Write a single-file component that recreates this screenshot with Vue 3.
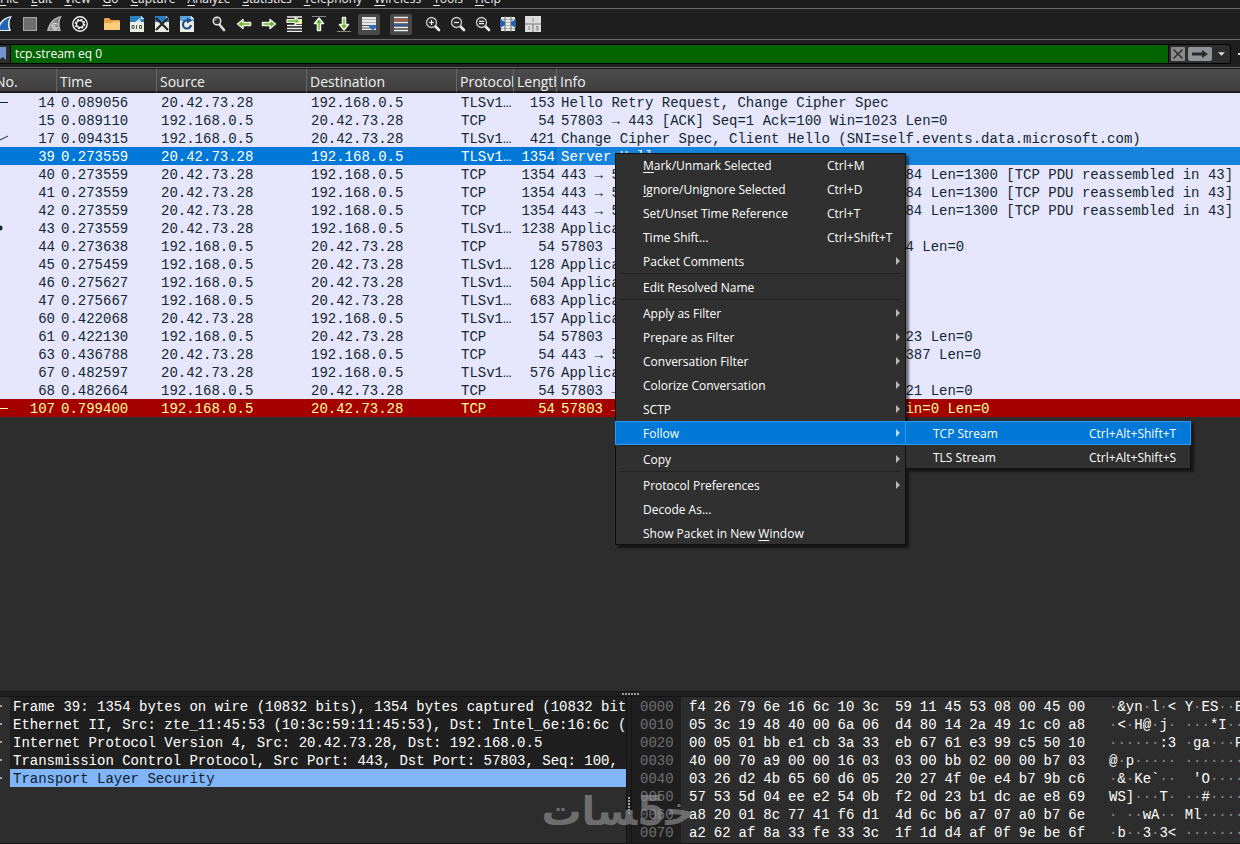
<script setup>
import { ref } from 'vue'

const menus = ['File', 'Edit', 'View', 'Go', 'Capture', 'Analyze', 'Statistics', 'Telephony', 'Wireless', 'Tools', 'Help']
const filter = ref('tcp.stream eq 0')

const A = '20.42.73.28'
const B = '192.168.0.5'
const TLS = 'TLSv1…'
const pdu = '[TCP PDU reassembled in 43]'
const packets = [
  [14, '0.089056', A, B, TLS, 153, 'Hello Retry Request, Change Cipher Spec'],
  [15, '0.089110', B, A, 'TCP', 54, '57803 → 443 [ACK] Seq=1 Ack=100 Win=1023 Len=0'],
  [17, '0.094315', B, A, TLS, 421, 'Change Cipher Spec, Client Hello (SNI=self.events.data.microsoft.com)'],
  [39, '0.273559', A, B, TLS, 1354, 'Server Hello'],
  [40, '0.273559', A, B, 'TCP', 1354, `443 → 57803 [ACK] Seq=1400 Ack=761 Win=4184 Len=1300 ${pdu}`],
  [41, '0.273559', A, B, 'TCP', 1354, `443 → 57803 [ACK] Seq=2700 Ack=761 Win=4184 Len=1300 ${pdu}`],
  [42, '0.273559', A, B, 'TCP', 1354, `443 → 57803 [ACK] Seq=4000 Ack=761 Win=4184 Len=1300 ${pdu}`],
  [43, '0.273559', A, B, TLS, 1238, 'Application Data'],
  [44, '0.273638', B, A, 'TCP', 54, '57803 → 443 [ACK] Seq=761 Ack=648 Win=1024 Len=0'],
  [45, '0.275459', B, A, TLS, 128, 'Application Data'],
  [46, '0.275627', B, A, TLS, 504, 'Application Data'],
  [47, '0.275667', B, A, TLS, 683, 'Application Data'],
  [60, '0.422068', A, B, TLS, 157, 'Application Data'],
  [61, '0.422130', B, A, 'TCP', 54, '57803 → 443 [ACK] Seq=1914 Ack=658 Win=1023 Len=0'],
  [63, '0.436788', A, B, 'TCP', 54, '443 → 57803 [ACK] Seq=6587 Ack=191 Win=16387 Len=0'],
  [67, '0.482597', A, B, TLS, 576, 'Application Data'],
  [68, '0.482664', B, A, 'TCP', 54, '57803 → 443 [ACK] Seq=1914 Ack=710 Win=1021 Len=0'],
  [107, '0.799400', B, A, 'TCP', 54, '57803 → 443 [RST, ACK] Seq=1914 Ack=710 Win=0 Len=0'],
]
const marks = { 14: 'M0 9.500H8', 17: 'M0 11L8 7', 107: 'M0 9.500H8' }

const menuItems = [
  { key: 'M', rest: 'ark/Unmark Selected', short: 'Ctrl+M' },
  { key: 'I', rest: 'gnore/Unignore Selected', short: 'Ctrl+D' },
  { rest: 'Set/Unset Time Reference', short: 'Ctrl+T' },
  { rest: 'Time Shift...', short: 'Ctrl+Shift+T' },
  { rest: 'Packet Comments', sub: true },
  { sep: true },
  { rest: 'Edit Resolved Name' },
  { sep: true },
  { rest: 'Apply as Filter', sub: true },
  { rest: 'Prepare as Filter', sub: true },
  { rest: 'Conversation Filter', sub: true },
  { rest: 'Colorize Conversation', sub: true },
  { rest: 'SCTP', sub: true },
  { rest: 'Follow', sub: true, active: true },
  { sep: true },
  { rest: 'Copy', sub: true },
  { sep: true },
  { rest: 'Protocol Preferences', sub: true },
  { rest: 'Decode As...' },
  { pre: 'Show Packet in New ', key: 'W', rest: 'indow' },
]
const subItems = [
  { rest: 'TCP Stream', short: 'Ctrl+Alt+Shift+T', active: true },
  { rest: 'TLS Stream', short: 'Ctrl+Alt+Shift+S' },
]

const details = [
  'Frame 39: 1354 bytes on wire (10832 bits), 1354 bytes captured (10832 bits)',
  'Ethernet II, Src: zte_11:45:53 (10:3c:59:11:45:53), Dst: Intel_6e:16:6c (f4:26:79:6e:16:6c)',
  'Internet Protocol Version 4, Src: 20.42.73.28, Dst: 192.168.0.5',
  'Transmission Control Protocol, Src Port: 443, Dst Port: 57803, Seq: 100, Ack: 761',
  'Transport Layer Security',
]

const dump = [
  'f4 26 79 6e 16 6c 10 3c 59 11 45 53 08 00 45 00',
  '05 3c 19 48 40 00 6a 06 d4 80 14 2a 49 1c c0 a8',
  '00 05 01 bb e1 cb 3a 33 eb 67 61 e3 99 c5 50 10',
  '40 00 70 a9 00 00 16 03 03 00 bb 02 00 00 b7 03',
  '03 26 d2 4b 65 60 d6 05 20 27 4f 0e e4 b7 9b c6',
  '57 53 5d 04 ee e2 54 0b f2 0d 23 b1 dc ae e8 69',
  'a8 20 01 8c 77 41 f6 d1 4d 6c b6 a7 07 a0 b7 6e',
  'a2 62 af 8a 33 fe 33 3c 1f 1d d4 af 0f 9e be 6f',
].map((line, i) => {
  const bytes = line.split(' ')
  const chars = bytes.map((b) => {
    const n = parseInt(b, 16)
    return n >= 32 && n < 127 ? { c: String.fromCharCode(n) } : { c: '·', dim: true }
  })
  return {
    offset: '00' + i + '0',
    groups: [bytes.slice(0, 8), bytes.slice(8)],
    chars: [...chars.slice(0, 8), { c: ' ' }, ...chars.slice(8)],
  }
})
</script>

<template>
  <div class="app">
    <nav class="menubar" aria-label="Main menu">
      <button v-for="m in menus" :key="m" type="button"><u>{{ m[0] }}</u>{{ m.slice(1) }}</button>
    </nav>

    <div class="toolbar" role="toolbar" aria-label="Main toolbar">
      <button type="button" aria-label="Start capture">
        <svg viewBox="0 0 16 16"><path d="M0 15C1 7 6 1 15 0C12 4 12 10 14 15Z" fill="#e8eef5"/><path d="M2 14C3 8 7 3 13 1.500C10.500 5 10.500 10 12 14Z" fill="#2163b4"/></svg>
      </button>
      <button type="button" aria-label="Stop capture">
        <svg viewBox="0 0 16 16"><rect x="1.500" y="1.500" width="13" height="13" fill="#6e6e6e" stroke="#a6a6a6"/></svg>
      </button>
      <button type="button" aria-label="Restart capture">
        <svg viewBox="0 0 16 16"><path d="M0 15C2 7 6 1 15 0C12 4 12 10 14 15Z" fill="#b8b8b8"/><path d="M2 14C4 8 7 3 13 1.500C10.500 5 10.500 10 12 14Z" fill="#858585"/><path d="M10.500 8.500A3 3 0 1 0 11 11M8.500 9.500A1.200 1.200 0 1 0 9 11.500" fill="none" stroke="#d6d6d6" stroke-width="1.200"/></svg>
      </button>
      <button type="button" aria-label="Capture options">
        <svg viewBox="0 0 16 16"><circle cx="8" cy="8" r="7.200" fill="#1d1d1d" stroke="#f2f2f2" stroke-width="1.400"/><circle cx="8" cy="8" r="4.600" fill="none" stroke="#f2f2f2" stroke-width="1.400" stroke-dasharray="2 1.600"/><circle cx="8" cy="8" r="3.500" fill="none" stroke="#f2f2f2" stroke-width="1.400"/></svg>
      </button>
      <i></i>
      <button type="button" aria-label="Open">
        <svg viewBox="0 0 16 16"><path d="M0 3Q0 2 1 2H5L7 4H15Q16 4 16 5V13Q16 14 15 14H1Q0 14 0 13Z" fill="#e5a345"/><path d="M0 7H8L9.500 5.500H16V13Q16 14 15 14H1Q0 14 0 13Z" fill="#fbcd79"/></svg>
      </button>
      <button type="button" aria-label="Save">
        <svg viewBox="0 0 16 16"><path d="M1 0H12L15 3V16H1Z" fill="#e9eee2"/><path d="M1 0H12L15 3V6H1Z" fill="#2a7fc2"/><path d="M6 6L11 2L12 6Z" fill="#c8dff0"/><path d="M12 0L15 3H12Z" fill="#fff"/><path d="M3 9.500H5V12.500H3ZM7.500 9V13M10.500 9.500H12.500V12.500H10.500Z" fill="none" stroke="#555" stroke-width="1"/></svg>
      </button>
      <button type="button" aria-label="Close file">
        <svg viewBox="0 0 16 16"><path d="M1 0H12L15 3V16H1Z" fill="#e9eee2"/><path d="M1 0H12L15 3V6H1Z" fill="#2a7fc2"/><path d="M12 0L15 3H12Z" fill="#fff"/><path d="M2 2L14 14M14 2L2 14" stroke="#252525" stroke-width="2.200"/></svg>
      </button>
      <button type="button" aria-label="Reload file">
        <svg viewBox="0 0 16 16"><path d="M1 0H12L15 3V16H1Z" fill="#e9eee2"/><path d="M1 0H12L15 3V5H1Z" fill="#5ba3d8"/><path d="M12 0L15 3H12Z" fill="#fff"/><path d="M9 4.500H8A4 4 0 1 0 12 9" fill="none" stroke="#204b8f" stroke-width="2.200"/><path d="M8 1.500L13 4.500L8 7.500Z" fill="#204b8f"/></svg>
      </button>
      <i></i>
      <button type="button" aria-label="Find packet">
        <svg viewBox="0 0 16 16"><path d="M8 8L13 14" stroke="#ddd" stroke-width="2.600" stroke-linecap="round"/><circle cx="6" cy="5" r="3.800" fill="#333" stroke="#ededed" stroke-width="1.400"/><path d="M4 5Q4 3 6 3" fill="none" stroke="#999"/></svg>
      </button>
      <button type="button" aria-label="Go back">
        <svg viewBox="0 0 16 16"><path d="M1.500 8L7 3.500V6.500H14.500V9.500H7V12.500Z" fill="#64b52a" stroke="#f1f5e9" stroke-width="1.500" stroke-linejoin="round"/></svg>
      </button>
      <button type="button" aria-label="Go forward">
        <svg viewBox="0 0 16 16"><path d="M14.500 8L9 3.500V6.500H1.500V9.500H9V12.500Z" fill="#64b52a" stroke="#f1f5e9" stroke-width="1.500" stroke-linejoin="round"/></svg>
      </button>
      <button type="button" aria-label="Go to packet">
        <svg viewBox="0 0 16 16"><path d="M1 1H16M1 9.500H16M1 12.500H16M1 15.500H16" stroke="#efefef" stroke-width="1.500"/><path d="M11 3H16V8H11Z" fill="#f4ef9a"/><path d="M14 5L9 1.500V3.700H1V6.300H9V8.500Z" fill="#64b52a" stroke="#f1f5e9" stroke-width="1.200"/></svg>
      </button>
      <button type="button" aria-label="First packet">
        <svg viewBox="0 0 16 16"><path d="M1 .5H15" stroke="#888"/><path d="M8 2L12.500 7.500H9.500V14.500H6.500V7.500H3.500Z" fill="#64b52a" stroke="#f1f5e9" stroke-width="1.500" stroke-linejoin="round"/></svg>
      </button>
      <button type="button" aria-label="Last packet">
        <svg viewBox="0 0 16 16"><path d="M1 15.500H15" stroke="#888"/><path d="M8 14L12.500 8.500H9.500V1.500H6.500V8.500H3.500Z" fill="#64b52a" stroke="#f1f5e9" stroke-width="1.500" stroke-linejoin="round"/></svg>
      </button>
      <button type="button" class="on" aria-label="Auto scroll" aria-pressed="true">
        <svg viewBox="0 0 16 16"><path d="M1 1H15V14H1Z" fill="#e6e6e6"/><path d="M1 3.500H15M1 6.500H15" stroke="#b0b0b0"/><path d="M1 9.500H15M1 12H15" stroke="#5a5a5a"/><path d="M8 9H15V11L12 14.500L8 11Z" fill="#2a6cbb"/></svg>
      </button>
      <i></i>
      <button type="button" class="on" aria-label="Colorize" aria-pressed="true">
        <svg viewBox="0 0 16 16"><path d="M1 1.500H15M1 6.500H15M1 11.500H15M1 14.500H15" stroke="#efefef" stroke-width="1.600"/><path d="M1 4H15" stroke="#d2663c" stroke-width="1.400"/><path d="M1 9H15" stroke="#2f66b8" stroke-width="1.400"/></svg>
      </button>
      <i></i>
      <button type="button" aria-label="Zoom in">
        <svg viewBox="0 0 16 16"><path d="M10 10L14 14" stroke="#ececec" stroke-width="2.600" stroke-linecap="round"/><circle cx="6.500" cy="6.500" r="5" fill="#292929" stroke="#c9c9c9" stroke-width="1.300"/><path d="M4 6.500H9M6.500 4V9" stroke="#eee" stroke-width="1.200"/></svg>
      </button>
      <button type="button" aria-label="Zoom out">
        <svg viewBox="0 0 16 16"><path d="M10 10L14 14" stroke="#ececec" stroke-width="2.600" stroke-linecap="round"/><circle cx="6.500" cy="6.500" r="5" fill="#292929" stroke="#c9c9c9" stroke-width="1.300"/><path d="M4 6.500H9" stroke="#eee" stroke-width="1.200"/></svg>
      </button>
      <button type="button" aria-label="Normal size">
        <svg viewBox="0 0 16 16"><path d="M10 10L14 14" stroke="#ececec" stroke-width="2.600" stroke-linecap="round"/><circle cx="6.500" cy="6.500" r="5" fill="#292929" stroke="#c9c9c9" stroke-width="1.300"/><path d="M4 5.300H9M4 7.700H9" stroke="#eee" stroke-width="1.200"/></svg>
      </button>
      <button type="button" aria-label="Resize columns">
        <svg viewBox="0 0 16 16"><path d="M1 1H15V15H1Z" fill="#e8e8e8"/><path d="M1 3.500H15M1 12.500H15M5 6.500H11M5 9.500H11" stroke="#b4b4b4"/><path d="M5 0V16M11 0V16" stroke="#666"/><path d="M0 3L5 6V9L0 12ZM16 3L11 6V9L16 12Z" fill="#2460ad"/></svg>
      </button>
      <button type="button" aria-label="Reset layout">
        <svg viewBox="0 0 16 16"><path d="M0 0H16V16H0Z" fill="#dcdcdc"/><path d="M0 8H16M8 8V16" stroke="#777"/><path d="M8 2V6M4 10V14M11 10.500H13V14H11M11 12H13" fill="none" stroke="#8a8a8a"/></svg>
      </button>
    </div>

    <form class="filterbar" @submit.prevent>
      <div class="filterbox">
        <button type="button" class="bookmark" aria-label="Bookmark">
          <svg viewBox="0 0 10 16"><path d="M0 1H6V14L3 11L0 13Z" fill="#7394d0"/></svg>
        </button>
        <input v-model="filter" aria-label="Display filter" spellcheck="false">
        <button type="button" class="clear" aria-label="Clear filter">
          <svg viewBox="0 0 14 14"><rect width="14" height="14" rx="1" fill="#8b8b8b"/><path d="M2.500 2.500L11.500 11.500M11.500 2.500L2.500 11.500" stroke="#2e2e2e" stroke-width="1.500"/></svg>
        </button>
        <button type="submit" class="apply" aria-label="Apply filter">
          <svg viewBox="0 0 24 14"><rect width="24" height="14" rx="2" fill="#90949a"/><path d="M4 5.500H14V3L20 7L14 11V8.500H4Z" fill="#2a2a2a"/></svg>
        </button>
        <button type="button" class="drop" aria-label="Recent filters">
          <svg viewBox="0 0 8 4"><path d="M0 0H8L4 4Z" fill="#ddd"/></svg>
        </button>
      </div>
      <button type="button" class="plus" aria-label="Add filter button"><span></span></button>
    </form>

    <main class="list">
      <table>
        <colgroup><col class="c-no"><col class="c-time"><col class="c-addr"><col class="c-addr"><col class="c-proto"><col class="c-len"><col></colgroup>
        <thead>
          <tr><th class="first">No.</th><th>Time</th><th>Source</th><th>Destination</th><th>Protocol</th><th>Length</th><th>Info</th></tr>
        </thead>
        <tbody>
          <tr v-for="p in packets" :key="p[0]" :class="{ selected: p[0] === 39, reset: p[0] === 107 }">
            <td class="num">
              <svg v-if="marks[p[0]]" class="mark" viewBox="0 0 8 18"><path :d="marks[p[0]]" fill="none" stroke="currentColor"/></svg>
              <svg v-else-if="p[0] === 43" class="mark" viewBox="0 0 8 18"><circle cx="0" cy="9" r="2.500" fill="currentColor"/></svg>
              {{ p[0] }}
            </td>
            <td>{{ p[1] }}</td>
            <td>{{ p[2] }}</td>
            <td>{{ p[3] }}</td>
            <td>{{ p[4] }}</td>
            <td class="num">{{ p[5] }}</td>
            <td class="info">{{ p[6] }}</td>
          </tr>
        </tbody>
      </table>
    </main>

    <div class="hsplit"><span></span></div>

    <div class="bottom">
      <section class="details" aria-label="Packet details">
        <div v-for="(d, i) in details" :key="i" class="node" :class="{ current: i === 4 }">
          <span class="twist"></span><span class="label">{{ d }}</span>
        </div>
      </section>
      <div class="vsplit"><span></span></div>
      <section class="bytes" aria-label="Packet bytes">
        <div v-for="r in dump" :key="r.offset" class="hexrow">
          <span class="offset">{{ r.offset }}</span>
          <span v-for="(g, gi) in r.groups" :key="gi" class="group"><span v-for="(b, bi) in g" :key="bi">{{ b }}</span></span>
          <span class="ascii"><span v-for="(c, ci) in r.chars" :key="ci" :class="{ dim: c.dim }">{{ c.c }}</span></span>
        </div>
      </section>
    </div>

    <div class="watermark" lang="ar" dir="rtl">خ&#8205;5&#8205;سات</div>

    <div class="menu context" role="menu">
      <template v-for="(m, i) in menuItems" :key="i">
        <hr v-if="m.sep">
        <button v-else type="button" role="menuitem" :class="{ active: m.active }">
          <span class="name">{{ m.pre }}<u v-if="m.key">{{ m.key }}</u>{{ m.rest }}</span>
          <span v-if="m.short" class="short">{{ m.short }}</span>
          <svg v-if="m.sub" class="arrow" viewBox="0 0 4 8"><path d="M0 0L4 4L0 8Z" fill="currentColor"/></svg>
        </button>
      </template>
    </div>
    <div class="menu submenu" role="menu">
      <button v-for="m in subItems" :key="m.rest" type="button" role="menuitem" :class="{ active: m.active }">
        <span class="name">{{ m.rest }}</span><span class="short">{{ m.short }}</span>
      </button>
    </div>
  </div>
</template>

<style>
body { background: #2d2d2d; overflow: hidden; }
</style>

<style scoped>
* { box-sizing: border-box; }
button { background: none; border: 0; padding: 0; margin: 0; font: inherit; color: inherit; }
svg { display: block; }
.app {
  position: relative; display: flex; flex-direction: column; height: 100vh; overflow: hidden;
  background: #2d2d2d; color: #fff; font-family: "Open Sans", "Noto Sans", sans-serif; font-size: 12px;
}
.menubar {
  display: flex; align-items: flex-end; gap: 12px; height: 8px; overflow: hidden; flex: none;
  padding-bottom: 1px; background: #1c1c1c; color: #eee;
}
.menubar button { line-height: 16px; }
.toolbar {
  display: flex; align-items: center; height: 31px; flex: none; padding-right: 8px;
  background: #1f1f1f; border-top: 1px solid #6a6a6a;
}
.toolbar button { width: 22px; height: 21px; margin-right: 3px; display: grid; place-items: center; flex: none; border-radius: 2px; }
.toolbar button:first-child { margin-left: -6px; }
.toolbar .on { background: #484848; }
.toolbar svg { width: 16px; height: 16px; }
.toolbar i { width: 7px; flex: none; }
.filterbar {
  display: flex; align-items: center; height: 28px; flex: none; gap: 7px; overflow: hidden;
  background: #1f1f1f; border-top: 1px solid #6a6a6a;
}
.filterbox {
  display: flex; align-items: stretch; flex: 1; min-width: 0; height: 20px;
  background: #2d2d2d; border: 1px solid #000; border-left: 0; border-radius: 0 3px 3px 0;
}
.bookmark { width: 11px; flex: none; border-right: 1px solid #000; }
.bookmark svg { width: 10px; height: 16px; }
.filterbox input {
  flex: 1; min-width: 0; border: 0; border-right: 1px solid #000; outline: 0; padding: 0 4px;
  background: #006400; color: #fff; font: inherit;
}
.clear, .apply, .drop { flex: none; display: grid; place-items: center; }
.clear { width: 18px; }
.clear svg { width: 14px; height: 14px; }
.apply { width: 26px; }
.apply svg { width: 24px; height: 14px; }
.drop { width: 17px; }
.drop svg { width: 7px; height: 4px; }
.plus { width: 2px; flex: none; }
.plus span { display: block; height: 2px; background: #ddd; }

.list { flex: 1; min-height: 0; overflow: hidden; border-top: 1px solid #6a6a6a; }
table { width: 100%; table-layout: fixed; border-collapse: separate; border-spacing: 0; }
.c-no { width: 57px; }
.c-time { width: 100px; }
.c-addr { width: 150px; }
.c-proto { width: 57px; }
.c-len { width: 43px; }
th {
  height: 25px; padding: 4px 0 0 3px; overflow: hidden; white-space: nowrap; text-align: left;
  font-size: 14px; line-height: 18px; font-weight: 400; color: #f2f2f2;
  background: linear-gradient(#4b4b4b, #404040); border-top: 1px solid #161616;
  border-bottom: 2px solid #1c1c1c; border-right: 1px solid #666;
}
th.first { padding-left: 0; text-indent: -5px; }
th:last-child { border-right: 0; }
td {
  position: relative; height: 18px; padding: 2px 0 0 4px; overflow: hidden; white-space: nowrap;
  background: #e7e6ff; color: #12272e;
  font: 14px/16px "Liberation Mono", "DejaVu Sans Mono", monospace;
}
td.num { text-align: right; padding: 2px 2px 0 0; }
.selected td { background: #0078d7; color: #fff; }
.selected td.info { background: #1583db; }
.reset td { background: #a40000; color: #fffc9c; }
.mark { position: absolute; left: 0; top: 0; width: 8px; height: 18px; }

.hsplit, .vsplit { display: grid; place-items: center; background: #1f1f1f; }
.hsplit { height: 6px; flex: none; border-top: 1px solid #141414; border-bottom: 1px solid #141414; }
.hsplit span { width: 18px; height: 2px; margin-left: 22px; background: repeating-linear-gradient(90deg, #999 0 2px, transparent 2px 3px); }
.vsplit { border-left: 1px solid #141414; border-right: 1px solid #141414; }
.vsplit span { width: 2px; height: 18px; margin-top: 72px; background: repeating-linear-gradient(#999 0 2px, transparent 2px 3px); }
.bottom {
  display: grid; grid-template-columns: minmax(0, 626fr) 6px minmax(0, 608fr); flex: none;
  border-bottom: 1px solid #141414;
  font: 14px/16px "Liberation Mono", "DejaVu Sans Mono", monospace;
}
.details { overflow: hidden; }
.node { display: flex; white-space: pre; }
.twist { width: 10px; flex: none; display: flex; align-items: center; }
.twist::before { content: ""; width: 2px; height: 2px; background: #aaa; }
.label { flex: 1; min-width: 0; overflow: hidden; padding: 2px 0 0 3px; background: #1f1f1f; }
.current .label { background: #81b5f7; color: #0c1c2c; }
.bytes { overflow: hidden; padding-bottom: 2px; background: linear-gradient(90deg, #1f1f1f 49px, #2d2d2d 49px); }
.hexrow { display: flex; white-space: pre; padding-top: 2px; }
.offset { width: 49px; padding-left: 8px; color: #6f6f73; flex: none; }
.group { display: grid; grid-template-columns: repeat(8, 1fr); width: 198px; flex: none; margin-left: 8px; }
.ascii { margin-left: 16px; }
.dim { color: #8a8a8a; }

.watermark {
  position: absolute; left: 545px; top: 787px; width: 149px; text-align: center; white-space: nowrap;
  font: bold 40px/48px "DejaVu Sans", sans-serif; color: #9a9a9a; opacity: 0.6;
}

.menu {
  position: absolute; background: #303030;
  box-shadow: inset 0 0 0 1px #101010, 3px 3px 2px rgba(0, 0, 0, 0.5);
}
.context { left: 615px; top: 153px; width: 291px; }
.submenu { left: 905px; top: 421px; width: 286px; }
.menu button { display: grid; grid-template-columns: 184px 1fr 4px; align-items: center; width: 100%; height: 24px; padding: 0 6px 0 28px; text-align: left; white-space: nowrap; }
.submenu button { grid-template-columns: 156px 1fr; }
.menu .active { background: #0078d7; box-shadow: inset 0 0 0 1px #2f9bf0; }
.arrow { grid-column: 3; width: 4px; height: 8px; color: #b8b8b0; }
.active .arrow { color: #b5dcff; }
.menu hr { height: 2px; margin: 0 5px; border: 0; border-top: 1px solid #222; }
u { text-underline-offset: 2px; }
</style>
